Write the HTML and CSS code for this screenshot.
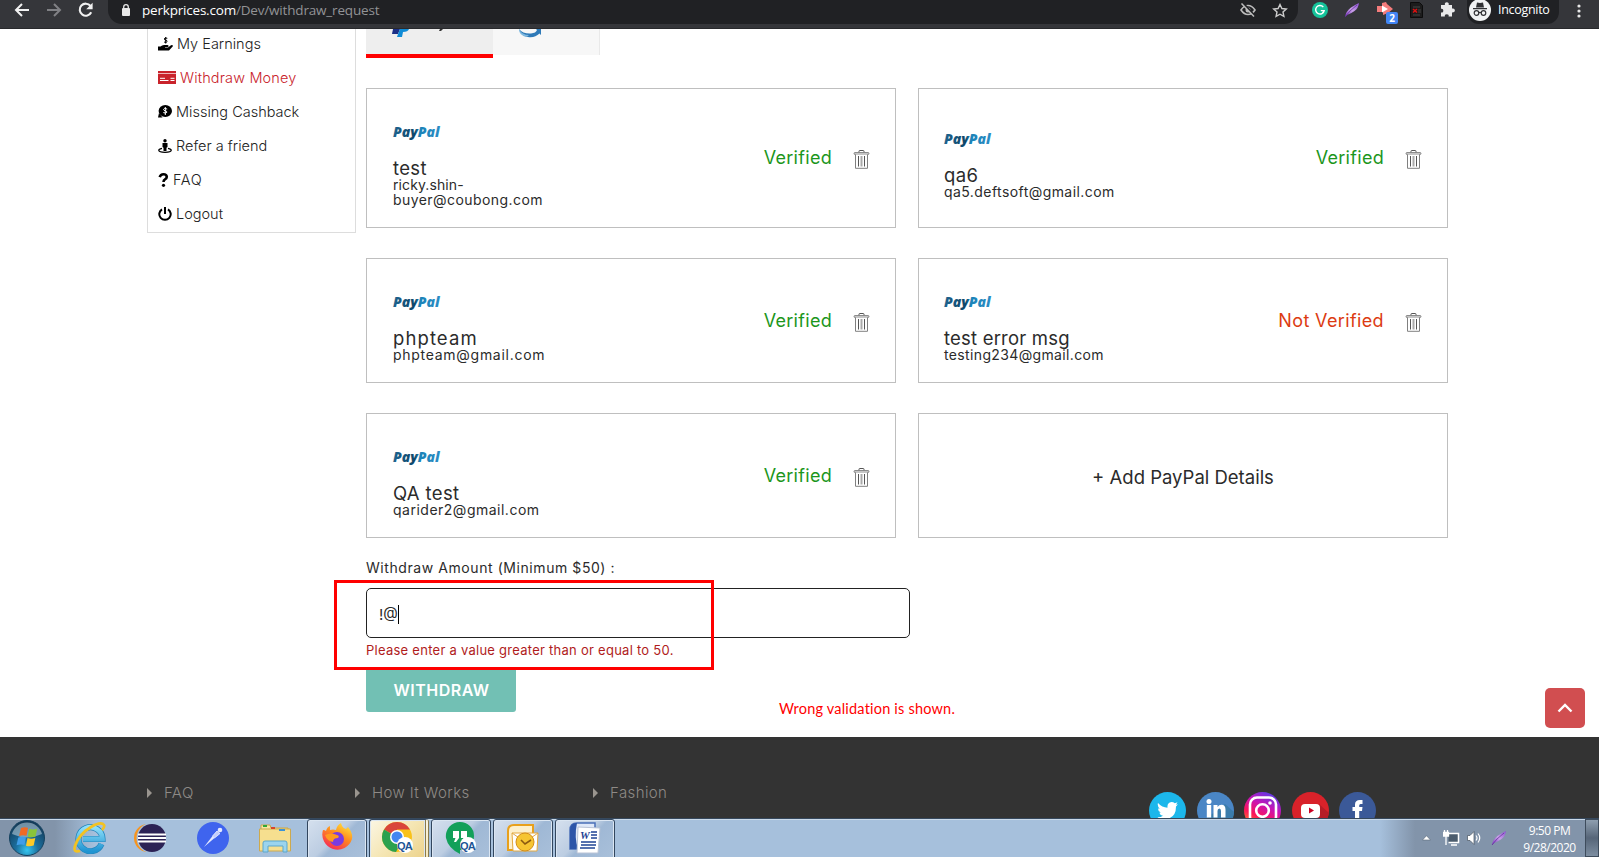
FILE: index.html
```html
<!DOCTYPE html>
<html lang="en">
<head>
<meta charset="utf-8">
<title>Withdraw Money</title>
<link rel="stylesheet" href="styles.css">
</head>
<body>
<svg class="defs" width="0" height="0" aria-hidden="true">
  <defs>
    <linearGradient id="ppg" x1="0" x2="1"><stop offset="0" stop-color="#1f6590"/><stop offset=".45" stop-color="#0e4668"/><stop offset=".55" stop-color="#1b83b8"/><stop offset="1" stop-color="#2b8dc4"/></linearGradient>
    <linearGradient id="insta" x1=".7" y1="0" x2=".2" y2="1"><stop offset="0" stop-color="#5a3be8"/><stop offset=".35" stop-color="#c813b4"/><stop offset=".65" stop-color="#fb1458"/><stop offset="1" stop-color="#ff9a1f"/></linearGradient>
    <linearGradient id="feather" x1="1" y1="0" x2="0" y2="1"><stop offset="0" stop-color="#8a4fd0"/><stop offset=".5" stop-color="#c9a0e8"/><stop offset="1" stop-color="#7a35c0"/></linearGradient>
    <radialGradient id="orb" cx=".5" cy=".85" r=".8"><stop offset="0" stop-color="#35c6f0"/><stop offset=".4" stop-color="#1b6f9e"/><stop offset="1" stop-color="#143a58"/></radialGradient>
    <linearGradient id="fox" x1=".8" y1="0" x2=".2" y2="1"><stop offset="0" stop-color="#ffe53b"/><stop offset=".45" stop-color="#ff8a1e"/><stop offset="1" stop-color="#f5215c"/></linearGradient>
    <linearGradient id="ie" x1="0" y1="0" x2="0" y2="1"><stop offset="0" stop-color="#8fe0fa"/><stop offset="1" stop-color="#1f94d2"/></linearGradient>
    <symbol id="trash" viewBox="0 0 17 19">
      <path d="M6 2.500V1.200Q6 .5 6.800 .5h3.400q.8 0 .8.700v1.300" fill="none" stroke="#555"/>
      <rect x="1" y="2.500" width="15" height="2" rx="1" fill="#c4c4c4" stroke="#777" stroke-width=".8"/>
      <path d="M2.500 4.500v13.800h12V4.500" fill="#fff" stroke="#808080"/>
      <path d="M5.500 6v10.500M11.500 6v10.500" stroke="#555"/><path d="M8.500 6v10.500" stroke="#aaa" stroke-width="2"/>
    </symbol>
    <symbol id="quill" viewBox="0 0 16 16"><path d="M1 15Q2 9 7 5.500T15 1Q14.500 6 10.500 9T3.500 12.800Z" fill="url(#feather)"/><path d="M1 15Q5 9 13 3" fill="none" stroke="#5c2a94" stroke-width=".7"/></symbol>
  </defs>
</svg>

<header class="browser">
  <div class="nav">
    <svg width="16" height="16" viewBox="0 0 16 16"><path d="M15 8H2M8 2 2 8l6 6" fill="none" stroke="#f1f1f1" stroke-width="2"/></svg>
    <svg width="16" height="16" viewBox="0 0 16 16"><path d="M1 8h13M8 2l6 6-6 6" fill="none" stroke="#808185" stroke-width="2"/></svg>
    <svg width="16" height="16" viewBox="0 0 16 16"><path d="M13.200 10.200A6 6 0 1 1 12.500 4" fill="none" stroke="#f1f1f1" stroke-width="2.100"/><path d="M14.600 .8v6.400H8.200Z" fill="#f1f1f1"/></svg>
  </div>
  <div class="omnibox">
    <svg class="lock" width="10" height="12" viewBox="0 0 10 12"><rect x="1" y="4" width="8" height="8" rx="1" fill="#e8e8e8"/><path d="M2.700 5V3a2.300 2.300 0 0 1 4.600 0v2" fill="none" stroke="#e8e8e8" stroke-width="1.300"/></svg>
    <span class="url"><b>perkprices.com</b>/Dev/withdraw_request</span>
    <svg class="eye" width="16" height="14" viewBox="0 0 16 14"><path d="M1 7Q4 2.500 8 2.500T15 7Q12 11.500 8 11.500T1 7Z" fill="none" stroke="#bbb" stroke-width="1.600"/><circle cx="8" cy="7" r="2.500" fill="#bbb"/><path d="M3 0 15 13" stroke="#202124" stroke-width="2"/><path d="M1.500 .5 14 13.500" stroke="#bbb" stroke-width="1.500"/></svg>
    <svg class="star" width="16" height="15" viewBox="0 0 16 15"><path d="M8 1.500l1.900 4 4.400.5-3.300 3 .9 4.300L8 11.200l-3.900 2.100.9-4.300-3.300-3 4.400-.5Z" fill="none" stroke="#ccc" stroke-width="1.400"/></svg>
  </div>
  <div class="ext">
    <svg width="16" height="16" viewBox="0 0 16 16"><circle cx="8" cy="8" r="8" fill="#15c39a"/><path d="M11.300 5A4.300 4.300 0 1 0 12.200 8.600H8.800M10.500 11l1.900-2.400" fill="none" stroke="#fff" stroke-width="1.400"/></svg>
    <svg width="16" height="16"><use href="#quill"/></svg>
    <div class="flag"><svg width="18" height="14" viewBox="0 0 18 14"><path d="M1 4h5V1l4-1 1 2 6 5-5 4-5 2v-3H1Z" fill="#f47c7c"/><path d="M6 3.500v7l6-3.500Z" fill="#fff"/></svg><span class="count">2</span></div>
    <svg width="13" height="16" viewBox="0 0 13 16"><path d="M.5.500h9l3 3v12H.5Z" fill="#1c1c1c" stroke="#0c0c0c"/><path d="M3 5h7M8 8h3M8 10h3M3 13h7" stroke="#444"/><path d="M3 7l4 3.500M7 7l-4 3.500" stroke="#d11" stroke-width="1.600"/></svg>
    <svg width="16" height="15" viewBox="0 0 16 15"><path d="M2 3h4a2 2 0 1 1 3.600 0H13v3.600a2 2 0 1 1 0 3.600V14.500H9.600a1.900 1.900 0 1 0-3.700 0H2v-4a1.900 1.900 0 1 0 0-3.700Z" fill="#e9e9ea"/></svg>
  </div>
  <div class="profile">
    <svg width="22" height="22" viewBox="0 0 22 22"><circle cx="11" cy="11" r="11" fill="#f1f3f4"/><path d="M7 8.500 8 3.500l3 .6 3-.6 1 5Z M4 9h14v1.200H4Z" fill="#303134"/><g fill="none" stroke="#303134" stroke-width="1.200"><circle cx="7.500" cy="14" r="2.300"/><circle cx="14.500" cy="14" r="2.300"/><path d="M9.800 13.700q1.200-.8 2.400 0"/></g></svg>
    <span>Incognito</span>
  </div>
  <svg class="dots" width="4" height="14" viewBox="0 0 4 14"><g fill="#e8e8e8"><circle cx="2" cy="2" r="1.600"/><circle cx="2" cy="7" r="1.600"/><circle cx="2" cy="12" r="1.600"/></g></svg>
</header>

<main class="page">
  <nav class="sidebar">
    <a><svg width="15" height="14" viewBox="0 0 15 14"><path d="M0 9.500h2.500Q4 8 6 8h3.500q1.200 0 1 1.200T9 10H7v.6h3L13 8.300q1.300-.7 1.800.2.300.8-.6 1.500L11 13.500H0Z"/><path d="M9.300 1.300Q6.200.300 6.300 2q.1 1 1.500 1.200 1.500.4 1.300 1.400-.4 1.300-3 .5M7.700 0v6.500" fill="none" stroke="#000"/></svg><span class="w1">My Earnings</span></a>
    <a class="on"><svg width="18" height="13" viewBox="0 0 18 13"><path d="M0 0h18v13H0Z" fill="#c9232b"/><path d="M0 2.500h18" stroke="#f0b7ba"/><path d="M2 7.300h5M2 9.500h8.500M12.500 7.300h4M12.500 9.500h4" stroke="#fff"/></svg><span class="w2">Withdraw Money</span></a>
    <a><svg width="14" height="13" viewBox="0 0 14 13"><ellipse cx="7.300" cy="6" rx="6.700" ry="6"/><path d="M1 8 0 12.500h4.500Z"/><path d="M9.200 4Q5.500 2.700 5.500 4.500q.2 1 1.800 1.300t1.600 1.400Q8.500 8.700 5.300 7.600M7.300 2v8" fill="none" stroke="#fff"/></svg><span class="w3">Missing Cashback</span></a>
    <a><svg width="14" height="14" viewBox="0 0 14 14"><circle cx="7" cy="1.700" r="1.700"/><path d="M4.500 4h5v4l-1 .7V12h-3V8.700l-1-.7Z"/><path d="M4 9.300Q.7 10 .7 11.200 1 13.300 7 13.300t6.300-2.100Q13.300 10 10 9.300" fill="none" stroke="#000" stroke-width="1.200"/></svg><span class="w4">Refer a friend</span></a>
    <a><svg width="11" height="14" viewBox="0 0 10 14"><path d="M1.200 4.200Q2 1.300 5 1.300t3.300 2.500Q8.300 5.500 6.500 6.400 5 7.200 5 9" fill="none" stroke="#000" stroke-width="2.600"/><circle cx="5" cy="12.300" r="1.600"/></svg><span class="w5">FAQ</span></a>
    <a><svg width="14" height="14" viewBox="0 0 14 14"><path d="M4 2.300A5.700 5.700 0 1 0 10 2.300M7 0v7" fill="none" stroke="#000" stroke-width="2"/></svg><span class="w6">Logout</span></a>
  </nav>

  <section class="content">
    <div class="tabs">
      <div class="tab active"><svg width="90" height="10" viewBox="0 0 90 10"><path d="M1 0h7L6 5H0Z" fill="#1b2f86"/><path d="M8 0h9q-1 3-6 3l-1 5H5l1-3Z" fill="#0f8bd6"/><path d="M48 0h3l-2 2h-2Z" fill="#333"/></svg></div>
      <div class="tab"><svg width="24" height="9" viewBox="0 0 24 9"><path d="M0 0Q4 5 12 4.500 17 4 18 1L17 0h5v6l-1.500-1.500Q16 9 9 8 2 7 0 0Z" fill="#2f7ab8"/><path d="M0 0Q3 6 10 6 7 9 3 6 0 4 0 0Z" fill="#7fb9e0"/></svg></div>
    </div>

    <div class="cards">
      <article class="card">
        <div class="who"><svg class="pp" width="49" height="16"><text x="0" y="12">PayPal</text></svg><h4 class="n1">test</h4><p><span class="m0">ricky.shin-</span><br><span class="m1">buyer@coubong.com</span></p></div>
        <span class="state">Verified</span><svg class="bin" width="17" height="19"><use href="#trash"/></svg>
      </article>
      <article class="card">
        <div class="who"><svg class="pp" width="49" height="16"><text x="0" y="12">PayPal</text></svg><h4 class="n2">qa6</h4><p class="m2">qa5.deftsoft@gmail.com</p></div>
        <span class="state">Verified</span><svg class="bin" width="17" height="19"><use href="#trash"/></svg>
      </article>
      <article class="card">
        <div class="who"><svg class="pp" width="49" height="16"><text x="0" y="12">PayPal</text></svg><h4 class="n3">phpteam</h4><p class="m3">phpteam@gmail.com</p></div>
        <span class="state">Verified</span><svg class="bin" width="17" height="19"><use href="#trash"/></svg>
      </article>
      <article class="card">
        <div class="who"><svg class="pp" width="49" height="16"><text x="0" y="12">PayPal</text></svg><h4 class="n4">test error msg</h4><p class="m4">testing234@gmail.com</p></div>
        <span class="state bad">Not Verified</span><svg class="bin" width="17" height="19"><use href="#trash"/></svg>
      </article>
      <article class="card">
        <div class="who"><svg class="pp" width="49" height="16"><text x="0" y="12">PayPal</text></svg><h4 class="n5">QA test</h4><p class="m5">qarider2@gmail.com</p></div>
        <span class="state">Verified</span><svg class="bin" width="17" height="19"><use href="#trash"/></svg>
      </article>
      <article class="card add"><span>+ Add PayPal Details</span></article>
    </div>

    <form class="withdraw">
      <label>Withdraw Amount (Minimum $50) :</label>
      <div class="field"><span>!@</span><i class="caret"></i></div>
      <p class="error">Please enter a value greater than or equal to 50.</p>
      <div class="btn"><span>WITHDRAW</span></div>
    </form>
  </section>

  <div class="mark"></div>
  <div class="note">Wrong validation is shown.</div>
  <div class="totop"><svg width="16" height="10" viewBox="0 0 16 10"><path d="M1.500 8.500 8 2l6.500 6.500" fill="none" stroke="#fff" stroke-width="2.400"/></svg></div>
</main>

<footer class="footer">
  <ul class="links"><li class="f1"><span>FAQ</span></li><li class="f2"><span>How It Works</span></li><li class="f3"><span>Fashion</span></li></ul>
  <div class="social">
    <svg width="37" height="37" viewBox="0 0 37 37"><circle cx="18.500" cy="18.500" r="18.500" fill="#1cb7eb"/><path d="M9 11q4 4.500 9.500 4.700Q18 10.500 22.500 10q2 0 3.300 1.300l2.700-1-1.500 2.400 2-.4-2 2.200Q27 27 15 27q-4 0-6.500-1.700 3.500 0 5.500-1.600-3-.5-3.700-3l1.500-.1Q9 19.500 9 16.500l1.700.3Q8 14 9 11Z" fill="#fff"/></svg>
    <svg width="37" height="37" viewBox="0 0 37 37"><circle cx="18.500" cy="18.500" r="18.500" fill="#4a86c5"/><path d="M28 12 37 20q0 10-10 16L10 26Z" fill="#3b7cab"/><g fill="#fff"><circle cx="12" cy="9.500" r="2.500"/><path d="M9.800 13h4.400v12.500H9.800ZM16.500 13h4v2q1.500-2.300 4-2.300 4 0 4 5v7.800H24V19q0-2.500-1.600-2.500-1.900 0-1.900 2.500v6.500h-4Z"/></g></svg>
    <svg width="37" height="37" viewBox="0 0 37 37"><circle cx="18.500" cy="18.500" r="18.500" fill="url(#insta)"/><g fill="none" stroke="#fff" stroke-width="2.600"><rect x="6" y="5.500" width="26" height="26" rx="7"/><circle cx="18.500" cy="18.500" r="6.300"/></g><circle cx="26" cy="11" r="1.800" fill="#fff"/></svg>
    <svg width="37" height="37" viewBox="0 0 37 37"><circle cx="18.500" cy="18.500" r="18.500" fill="#d8222a"/><path d="M27 12 37 21q-2 10-11 14L10 26Z" fill="#b51d27"/><rect x="9" y="12" width="19" height="14" rx="4" fill="#fff"/><path d="M17 15.500v6l5-3Z" fill="#c02"/></svg>
    <svg width="37" height="37" viewBox="0 0 37 37"><circle cx="18.500" cy="18.500" r="18.500" fill="#3b5998"/><path d="M16 31V19h-2.500v-4H16v-2.500Q16 8 21 8h2.500v4h-2q-1.300 0-1.300 1.500V15h3.300l-.5 4h-2.800v12Z" fill="#fff"/></svg>
  </div>
</footer>

<div class="taskbar">
  <div class="pins">
    <svg width="36" height="36" viewBox="0 0 36 36"><circle cx="18" cy="18" r="17.500" fill="url(#orb)" stroke="#16425f"/><path d="M3 14A15.500 15.500 0 0 1 33 14Q18 21 3 14Z" fill="#cfe2ec" opacity=".5"/><path d="M12 8q3.500-1.500 7-.2l-1.500 8q-3.500-1.200-7.500.2Z" fill="#f06a25"/><path d="M20.200 8.800q3.500 1.500 8 0l-1.700 7.700q-4 1.500-7.800.2Z" fill="#8ac43a"/><path d="M9.300 17.500q4-1.500 7.700-.2L15.500 25q-4-1-8 .3Z" fill="#3f9de8"/><path d="M18.500 18q3.500 1.300 7.800 0L24.700 25.500q-4 1.500-7.700.3Z" fill="#fcc926"/></svg>
    <svg width="34" height="32" viewBox="0 0 34 32"><path d="M28.500 22A12 12 0 1 1 29.500 17H10" fill="none" stroke="#2385bb" stroke-width="6.200"/><path d="M28.500 22A12 12 0 1 1 29.500 17H10" fill="none" stroke="url(#ie)" stroke-width="4.800"/><path d="M7 29Q0 31 2 24 6 12 18 5 28-1 31 3q1 2-2 5" fill="none" stroke="#f2c222" stroke-width="2.700"/></svg>
    <svg width="33" height="30" viewBox="0 0 33 30"><circle cx="14" cy="15" r="14" fill="#f7941e"/><circle cx="17.500" cy="15" r="15" fill="#a6c0dc"/><circle cx="18" cy="15" r="14" fill="#2c2255"/><path d="M4 11.500h28M4 15h28M4 18.500h28" stroke="#fff" stroke-width="1.800"/></svg>
    <svg width="32" height="32" viewBox="0 0 32 32"><circle cx="16" cy="16" r="16" fill="#3f64ee"/><path d="M7 25 15.500 14l2 2Z" fill="#e4e9ff"/><path d="M15.500 14 20 9l3 2.500-5.500 4.500Z" fill="#c3cdfb" stroke="#fff" stroke-width=".7"/><circle cx="23" cy="8" r="2.300" fill="#e4e9ff"/></svg>
    <svg width="32" height="30" viewBox="0 0 32 30"><path d="M2 2h9l1 3h17v4H2Z" fill="#f7e6a0" stroke="#c9a84a"/><path d="M.5 6h31v22H.5Z" fill="#f6df8f" stroke="#cda94d"/><path d="M4 3h4" stroke="#2fa836" stroke-width="2"/><path d="M12 5h4" stroke="#d8452a" stroke-width="2"/><path d="M20 7h6" stroke="#3b93d8" stroke-width="2"/><path d="M4 29V20q0-2 2-2h20q2 0 2 2v9h-4v-6H9v6Z" fill="#9bd4ee" stroke="#5aa7cd"/></svg>
  </div>
  <div class="apps">
    <div class="app"><svg width="32" height="32" viewBox="0 0 32 32"><path d="M2 8q2 0 3 1 1-4 4-5v4q3-1 6 0Q16 3 20 1q1 5 5 6l2-2q5 6 4 12A15 15 0 1 1 2 8Z" fill="url(#fox)"/><circle cx="16" cy="17" r="7" fill="#7a3be0"/><path d="M4 13q6-3 12 0 3 1 1 3-5 0-5 4-6-1-8-7Z" fill="#ff9a1e"/></svg></div>
    <div class="app lit"><svg width="34" height="34" viewBox="0 0 34 34"><circle cx="16" cy="16" r="15" fill="#f9c21a"/><path d="M16 16 3 8.500A15 15 0 0 1 29 8.500H16Z" fill="#d9453b"/><path d="M16 16 3 8.500A15 15 0 0 0 15 31l6-12Z" fill="#2ba14e"/><circle cx="16" cy="16" r="7" fill="#fff"/><circle cx="16" cy="16" r="5.500" fill="#4286f0"/><circle cx="24" cy="24" r="8" fill="#fff"/><text class="qa" x="16" y="28.500">QA</text></svg></div>
    <div class="app"><svg width="32" height="34" viewBox="0 0 32 34"><path d="M15 1a14 14 0 0 1 0 28v4Q3 27 1 17A14 14 0 0 1 15 1Z" fill="#12a05a"/><path d="M8 10h6v7l-3 4H9l1.500-4H8ZM16 10h6v7l-3 4h-2l1.500-4H16Z" fill="#fff"/><circle cx="23" cy="24" r="8" fill="#fff"/><text class="qa" x="15" y="28.500">QA</text></svg></div>
    <div class="app"><svg width="32" height="30" viewBox="0 0 32 30"><path d="M1 27V8q0-6 6-6h19v25Z" fill="#fdf0cc" stroke="#e8a01c" stroke-width="2"/><path d="M5 10h26l-1 18H6Z" fill="#fff" stroke="#e3a940"/><path d="M5 10l13 9 13-9" fill="none" stroke="#e3a940"/><circle cx="18" cy="19" r="9" fill="#f6c532" stroke="#d48e16"/><path d="M14 17l4 4 6-4" fill="none" stroke="#8a5a10" stroke-width="1.600"/></svg></div>
    <div class="app"><svg width="32" height="32" viewBox="0 0 32 32"><path d="M1 27V8q0-7 7-7h18v26Z" fill="#dfe8f8" stroke="#4a6fb8" stroke-width="1.500"/><path d="M1 27V8q0-7 7-7Q5 15 9 27Z" fill="#2d55a8"/><path d="M9 5l22 1-2 25H8Z" fill="#fff" stroke="#b9c3d6"/><path d="M22 10h6M22 13h6M22 16h6M12 20h15M12 23h15M11 26h15" stroke="#1f4394" stroke-width="1.500"/><text class="wd" x="11" y="17">W</text></svg></div>
  </div>
  <div class="tray">
    <svg width="9" height="6" viewBox="0 0 9 6"><path d="M.5 5 4.500.700 8.500 5Z" fill="#fff" stroke="#5a6877" stroke-width=".6"/></svg>
    <svg class="net" width="17" height="16" viewBox="0 0 17 16"><path d="M5.500 3.500h10v9h-10M8 15h6" fill="#4b5c6d" stroke="#fff" stroke-width="1.500"/><path d="M1.500 0v4M4.500 0v4M.5 2.500h5V6h-5ZM3 6v9" fill="#fff" stroke="#fff" stroke-width="1.300"/></svg>
    <svg class="spk" width="15" height="16" viewBox="0 0 15 16"><path d="M.5 5.500H3L7 1.500v13L3 10.500H.5Z" fill="#fff" stroke="#46525f" stroke-width=".7"/><path d="M9 5.500q2 2.500 0 5M11 3.500q3.500 4.500 0 9" fill="none" stroke="#fff" stroke-width="1.200"/></svg>
    <svg class="ql" width="16" height="16"><use href="#quill"/></svg>
    <div class="clock"><span>9:50 PM</span><span>9/28/2020</span></div>
    <div class="peek"></div>
  </div>
</div>
</body>
</html>
```
FILE: styles.css
```css
* { box-sizing: border-box; }
body { margin: 0; width: 1599px; height: 857px; overflow: hidden; display: flex; flex-direction: column; background: #fff; color: #2b2b2b; font-family: Inter, "Open Sans", sans-serif; }
h4, p, ul { margin: 0; padding: 0; font-weight: 400; }
svg { display: block; flex: none; }
.defs { position: absolute; }

/* browser bar */
.browser { height: 29px; flex: none; display: flex; align-items: flex-start; background: #35363a; border-bottom: 1px solid #28292c; color: #fff; }
.nav { display: flex; gap: 16px; padding: 2px 0 0 14px; width: 108px; }
.omnibox { width: 1190px; height: 24px; background: #202124; border-radius: 0 0 14px 14px; display: flex; padding: 0 10px 0 13px; }
.lock { margin-top: 4px; }
.url { margin: 1px auto 0 11px; font: 13.500px/18px "Open Sans", sans-serif; color: #929396; letter-spacing: -.18px; }
.url b { font-weight: 400; color: #fff; letter-spacing: -.2px; }
.eye { margin: 3px 16px 0 0; }
.star { margin-top: 3px; }
.ext { display: flex; gap: 16px; padding: 2px 0 0 14px; width: 169px; }
.flag { position: relative; width: 18px; }
.count { position: absolute; left: 10px; top: 10px; width: 12px; height: 12px; border-radius: 2px; background: #4285f4; font: 700 10px/12px "Open Sans", sans-serif; text-align: center; }
.profile { width: 92px; height: 24px; border-radius: 0 0 12px 12px; background: #202124; display: flex; padding-left: 2px; gap: 7px; font: 12.500px/19px "Open Sans", sans-serif; letter-spacing: -.3px; }
.profile svg { margin-top: -1px; }
.dots { margin: 4px 0 0 18px; }

/* page */
.page { position: relative; height: 708px; flex: none; display: flex; gap: 10px; padding-left: 147px; }
.sidebar { width: 209px; height: 204px; border: 1px solid #ddd; border-top: 0; padding-left: 10px; overflow: hidden; }
.sidebar a { height: 34px; display: flex; align-items: center; gap: 4px; font-size: 14.500px; font-weight: 300; color: #222; }
.sidebar a:first-child { margin-top: -2.500px; }
.sidebar .on { color: #c9232b; }
.w2 { letter-spacing: .15px; }
.w5 { letter-spacing: .6px; }
.content { width: 1082px; }
.tabs { display: flex; height: 29px; }
.tab { width: 107px; height: 26px; background: #f7f7f7; border-right: 1px solid #e9e9e9; padding-left: 26px; }
.tab.active { width: 127px; height: 29px; background: #eee; border-right: 0; border-bottom: 4px solid red; }
.cards { margin-top: 30px; display: grid; grid-template-columns: 530px 530px; grid-template-rows: 140px 125px 125px; gap: 30px 22px; }
.card { border: 1px solid #bfbfbf; display: flex; align-items: center; padding: 0 25px 0 26px; }
.card:nth-child(even) { padding-left: 25px; }
.who { flex: 1; padding-top: 15px; }
.pp { margin-bottom: 16px; overflow: visible; }
.pp text { font: italic 800 14px "Open Sans", sans-serif; fill: url(#ppg); }
.card h4 { font-size: 18.500px; line-height: 22px; }
.card p { font-size: 14px; line-height: 15px; margin-top: -2px; }
.n1, .n2 { letter-spacing: .35px; }
.n3 { letter-spacing: 1.100px; }
.n4 { letter-spacing: .2px; }
.n5 { letter-spacing: .35px; }
.m0 { letter-spacing: .1px; }
.m1, .m2 { letter-spacing: .43px; }
.m3 { letter-spacing: .72px; }
.m4 { letter-spacing: .36px; }
.m5 { letter-spacing: .5px; }
.state { font-size: 18px; font-weight: 400; color: #1c961c; letter-spacing: .3px; margin-top: -1px; }
.state.bad { color: #dc3b12; letter-spacing: .37px; }
.bin { margin: 3px 0 0 21px; }
.add { justify-content: center; font-size: 18.500px; padding-top: 2px; }
.withdraw { padding-top: 20px; }
.withdraw label { display: block; font-size: 14px; line-height: 20px; letter-spacing: .57px; }
.field { margin-top: 10px; width: 544px; height: 50px; border: 1px solid #222; border-radius: 5px; display: flex; align-items: center; padding: 2px 0 0 12px; font-size: 15px; }
.caret { width: 1px; height: 19px; background: #000; }
.error { font-size: 13px; line-height: 18px; margin-top: 3px; color: #b01c1c; letter-spacing: .26px; }
.btn { margin-top: 11px; width: 150px; height: 42px; border-radius: 0 0 3px 3px; background: #72c0b4; color: #fff; font-weight: 600; font-size: 16px; letter-spacing: .5px; display: flex; align-items: center; justify-content: center; padding: 0 0 2px 1px; }
.mark { position: absolute; left: 334px; top: 551px; width: 380px; height: 90px; border: 3px solid red; }
.note { position: absolute; left: 779px; top: 670px; font: 14.500px/20px Lato, sans-serif; color: red; white-space: nowrap; letter-spacing: .2px; }
.totop { position: absolute; left: 1545px; top: 659px; width: 40px; height: 40px; border-radius: 5px; background: #d14e50; display: flex; align-items: center; justify-content: center; }

/* footer */
.footer { height: 81px; flex: none; background: #333; display: flex; overflow: hidden; padding-left: 147px; color: #8e8a86; }
.links { display: flex; width: 1002px; padding-top: 45px; list-style: none; font-size: 15px; font-weight: 300; line-height: 21px; letter-spacing: .4px; }
.links li { display: flex; gap: 12px; align-items: center; height: 21px; }
.links li::before { content: ""; border: solid transparent; border-width: 5px 0 5px 5px; border-left-color: #9a958f; }
.f1 { width: 208px; }
.f2 { width: 238px; }
.social { display: flex; gap: 10.500px; padding-top: 55px; }

/* taskbar */
.taskbar { height: 39px; flex: none; display: flex; border-top: 1px solid #36485c; box-shadow: inset 0 1px #c9d9ea; background: linear-gradient(90deg, #8294aa 0, #8294aa 55px, #a6c0dc 95px, #a6c0dc 1380px, #8294aa 1415px); }
.pins { width: 307px; display: flex; align-items: center; padding-left: 9px; }
.pins svg:nth-child(2) { margin-left: 28px; }
.pins svg:nth-child(3) { margin-left: 27px; }
.pins svg:nth-child(4) { margin-left: 30px; }
.pins svg:nth-child(5) { margin-left: 30px; }
.apps { display: flex; gap: 2px; flex: 1; }
.app { width: 60px; height: 40px; border: 1px solid #32465e; border-radius: 3px 3px 0 0; box-shadow: inset 0 0 0 1px #dbe6f2; background: linear-gradient(135deg, #d5e0ee 0, #bccde2 45%, #9fb8d5 55%, #a9c0da); display: flex; align-items: center; justify-content: center; padding-bottom: 2px; }
.app.lit { background: linear-gradient(135deg, #fbf6e4, #f5e6b4 50%, #ecd28b); border-right: 4px double #8a7a4a; }
.qa { font: 700 11px "Liberation Sans", sans-serif; fill: #1d5596; letter-spacing: -.8px; }
.wd { font: italic 700 11px "Liberation Serif", serif; fill: #1f4394; }
.tray { display: flex; align-items: center; }
.net { margin-left: 12px; }
.spk { margin-left: 7px; }
.ql { margin-left: 9px; }
.clock { width: 71px; margin-left: 7px; display: flex; flex-direction: column; align-items: center; font: 12px/17px "Open Sans", sans-serif; color: #fff; letter-spacing: -.5px; padding-top: 1px; }
.peek { width: 14px; height: 38px; border: 1px solid #3e4c5c; background: linear-gradient(#8f9fb0, #566578 50%, #7d8ea1); }
```
